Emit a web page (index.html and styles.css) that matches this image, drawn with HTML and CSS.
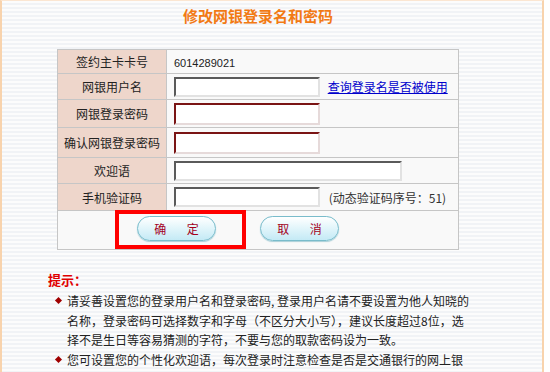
FILE: index.html
```html
<!DOCTYPE html>
<html lang="zh-CN">

<head>
    <meta charset="UTF-8">
    <title>修改网银登录名和密码</title>
    <link rel="stylesheet" href="styles.css">
</head>

<body>
    <div class="page">
        <div class="main">
            <div class="form-block">
                <h1 class="title">修改网银登录名和密码</h1>
                <table class="form-table">
                    <tr>
                        <td class="label">签约主卡卡号</td>
                        <td class="value"><span class="card-no">6014289021</span></td>
                    </tr>
                    <tr>
                        <td class="label">网银用户名</td>
                        <td class="value">
                            <input type="text" class="field">
                            <a href="#" class="check-link">查询登录名是否被使用</a>
                        </td>
                    </tr>
                    <tr>
                        <td class="label">网银登录密码</td>
                        <td class="value"><input type="password" class="field pwd"></td>
                    </tr>
                    <tr>
                        <td class="label">确认网银登录密码</td>
                        <td class="value"><input type="password" class="field pwd"></td>
                    </tr>
                    <tr>
                        <td class="label">欢迎语</td>
                        <td class="value"><input type="text" class="field wide"></td>
                    </tr>
                    <tr>
                        <td class="label">手机验证码</td>
                        <td class="value">
                            <input type="text" class="field">
                            <span class="sms-hint">(动态验证码序号：51)</span>
                        </td>
                    </tr>
                    <tr class="btn-row">
                        <td colspan="2">
                            <div class="btn-line">
                                <span class="confirm-box"><button class="pill-btn">确 定</button></span>
                                <button class="pill-btn cancel">取 消</button>
                            </div>
                        </td>
                    </tr>
                </table>
            </div>

            <div class="tips">
                <div class="tips-title">提示：</div>
                <ul class="tips-list">
                    <li><span>请妥善设置您的登录用户名和登录密码, 登录用户名请不要设置为他人知晓的<br>名称，登录密码可选择数字和字母（不区分大小写），建议长度超过8位，选<br>择不是生日等容易猜测的字符，不要与您的取款密码设为一致。</span></li>
                    <li><span>您可设置您的个性化欢迎语，每次登录时注意检查是否是交通银行的网上银</span></li>
                </ul>
            </div>
        </div>
    </div>
</body>

</html>
```

FILE: styles.css
```css
/* page frame */
body {
    margin: 0;
    background-color: #fff;
    font-family: "Noto Sans CJK SC", "Liberation Sans", sans-serif;
    font-size: 12px;
    color: #222;
}

.page {
    width: 540px;
    min-height: 371px;
    border-top: 1px solid #fbe6d2;
    border-left: 2px solid #f8d3ad;
    border-right: 2px solid #f8d3ad;
    background: repeating-linear-gradient(to bottom, #fcfcfc 0, #fcfcfc 2px, #f1f3f6 2px, #f1f3f6 4px);
}

.main {
    padding-left: 46px;
}

.form-block {
    width: 402px;
    margin-left: 9px;
}

.title {
    margin: 0;
    padding-top: 6px;
    font-size: 15px;
    line-height: 18px;
    font-weight: bold;
    text-align: center;
    color: #f27a14;
}

/* form table */
.form-table {
    width: 402px;
    margin-top: 24px;
    border-collapse: collapse;
    border: 1px solid #b5b5b5;
}

.form-table td {
    border: 1px solid #c6c6c6;
    padding: 0;
}

.form-table tr:nth-child(1) td { height: 23px; }
.form-table tr:nth-child(2) td { height: 25px; }
.form-table tr:nth-child(3) td { height: 27px; }
.form-table tr:nth-child(4) td { height: 29px; }
.form-table tr:nth-child(5) td { height: 25px; }
.form-table tr:nth-child(6) td { height: 26px; }

.label {
    width: 108px;
    background-color: #eed6cb;
    text-align: center;
    color: #222;
}

.value {
    background-color: #f9f9f9;
    padding-left: 7px !important;
}

.card-no {
    font-family: "Liberation Sans", Arial, sans-serif;
    font-size: 11px;
    color: #222;
}

.field {
    box-sizing: border-box;
    width: 146px;
    height: 20px;
    margin: 0;
    padding: 0 2px;
    vertical-align: middle;
    background-color: #fff;
    border: 2px solid;
    border-color: #5a5a5a #e2e2e2 #e2e2e2 #5a5a5a;
}

.field.pwd {
    height: 22px;
    border-color: #7a1414 #e6dada #e6dada #7a1414;
}

.field.wide {
    width: 228px;
}

.check-link {
    margin-left: 5px;
    color: #0000cc;
    text-decoration: underline;
    vertical-align: middle;
}

.sms-hint {
    margin-left: 6px;
    color: #333;
    vertical-align: middle;
}

/* buttons */
.btn-row td {
    height: 37px;
    vertical-align: top;
    background-color: #f9f9f9;
}

.btn-line {
    display: flex;
    align-items: flex-start;
    margin-top: -1px;
}

.confirm-box {
    display: block;
    margin-left: 57px;
    padding: 2px 26px 4px 18px;
    border: 4px solid #ff0000;
}

.pill-btn {
    display: block;
    width: 79px;
    height: 25px;
    padding: 0;
    border: 1px solid #79bccb;
    border-radius: 13px;
    background: linear-gradient(to bottom, #ffffff 0%, #e4f6fb 45%, #c4eaf5 100%);
    box-shadow: 0 1px 1px #a9cfd8;
    color: #a3001c;
    font-family: "Noto Sans CJK SC", sans-serif;
    font-size: 12px;
    word-spacing: 18px;
    cursor: pointer;
}

.pill-btn.cancel {
    margin-left: 14px;
    margin-top: 6px;
}

/* tips */
.tips {
    margin-top: 20px;
}

.tips-title {
    font-size: 13px;
    line-height: 20px;
    font-weight: bold;
    color: #e00000;
}

.tips-list {
    margin: 1px 0 0 0;
    padding: 0;
    list-style: none;
}

.tips-list li {
    display: flex;
    line-height: 19.7px;
    color: #222;
}

.tips-list li::before {
    content: "";
    flex: none;
    width: 5px;
    height: 5px;
    margin: 7px 6px 0 8px;
    background-color: #a00000;
    transform: rotate(45deg);
}
```
